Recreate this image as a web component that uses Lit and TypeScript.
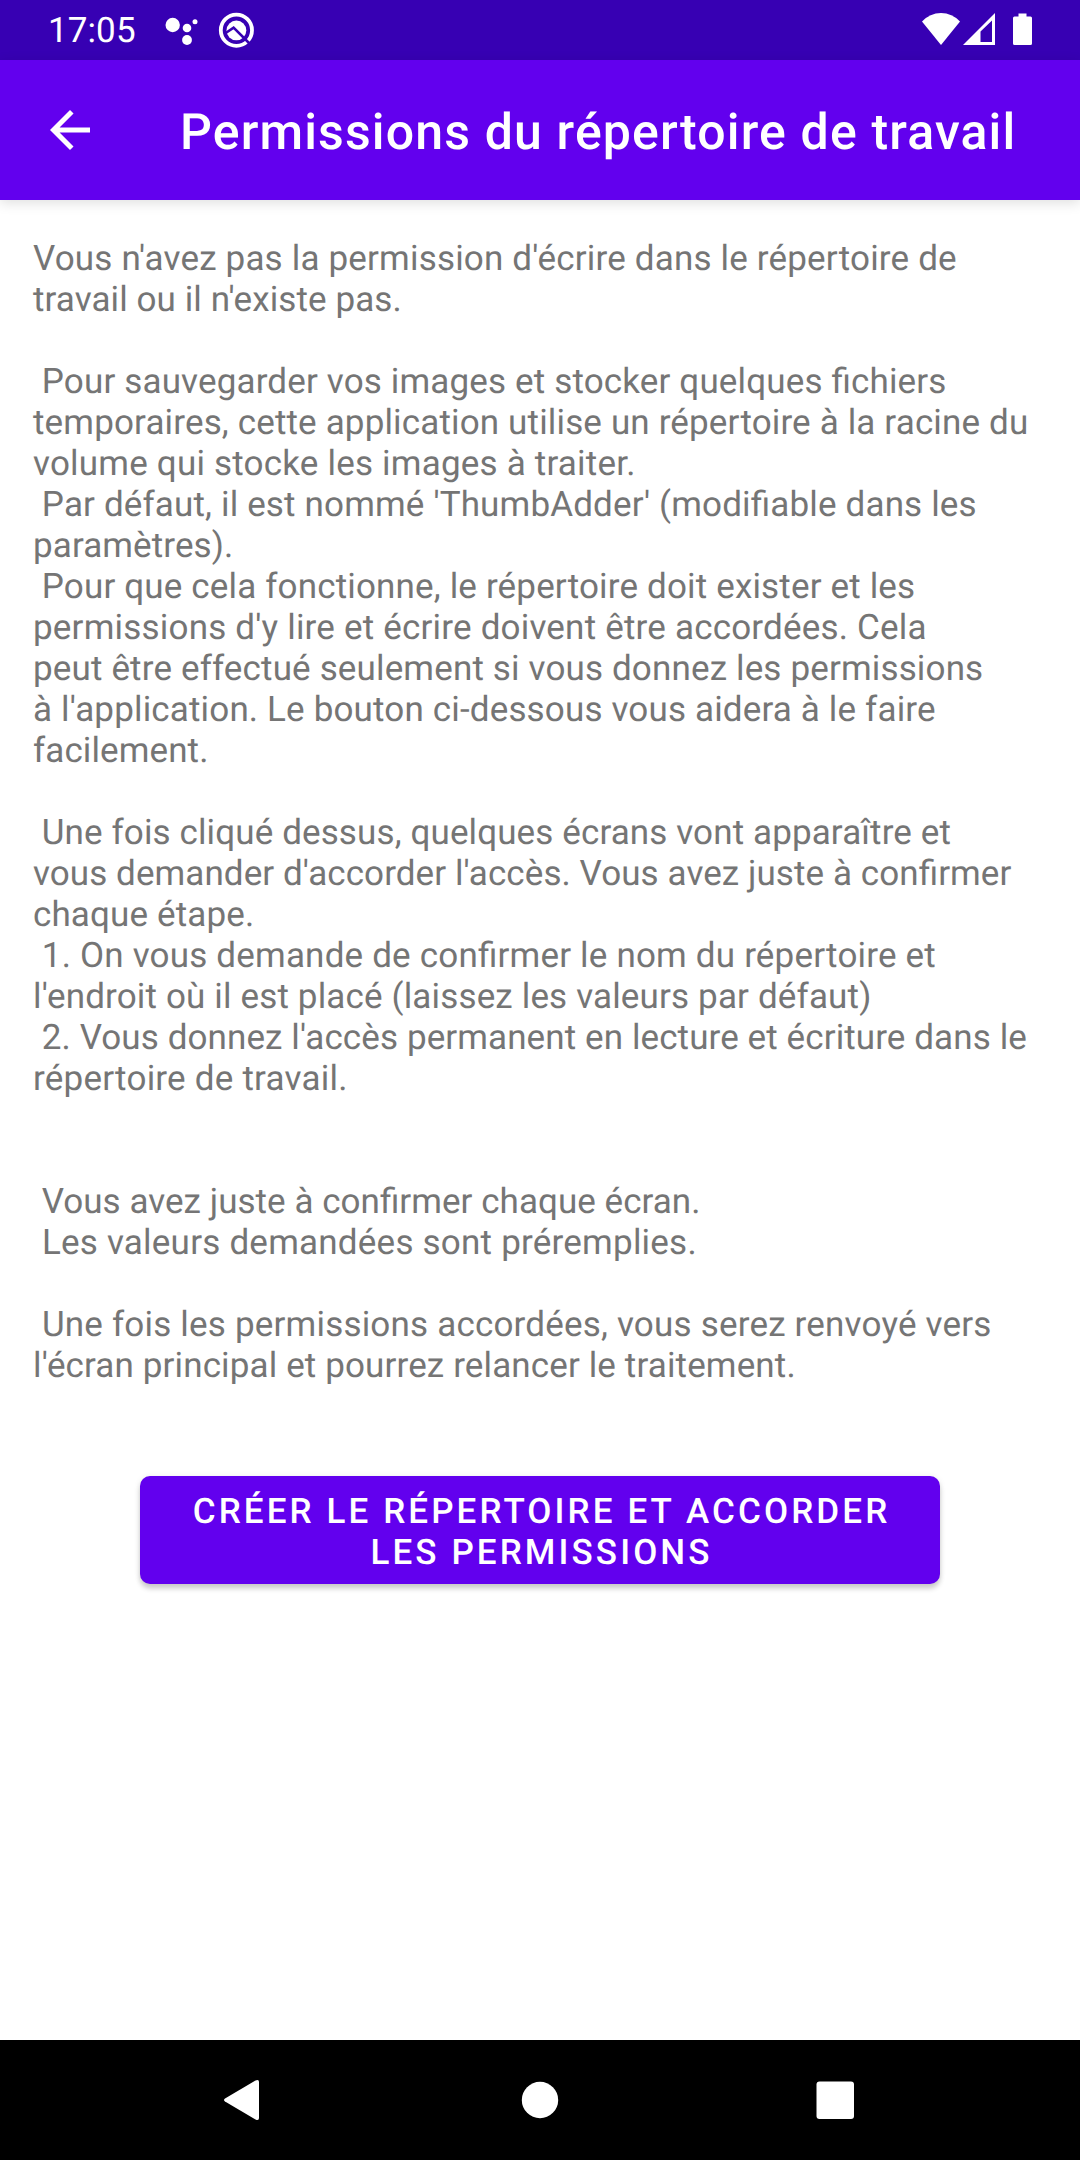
import { LitElement, html, css } from "lit";
import { customElement } from "lit/decorators.js";

interface Line {
  text: string;
  tracking: number;
}

const line = (text = "", tracking = 0): Line => ({ text, tracking });

// Message lines with their letter tracking in pixels.
const MESSAGE: Line[] = [
  line("Vous n'avez pas la permission d'écrire dans le répertoire de", 0.178),
  line("travail ou il n'existe pas.", 0.09),
  line(),
  line(" Pour sauvegarder vos images et stocker quelques fichiers", 0.15),
  line("temporaires, cette application utilise un répertoire à la racine du", 0.15),
  line("volume qui stocke les images à traiter.", 0.2),
  line(" Par défaut, il est nommé 'ThumbAdder' (modifiable dans les", 0.155),
  line("paramètres).", 0.1),
  line(" Pour que cela fonctionne, le répertoire doit exister et les", 0.16),
  line("permissions d'y lire et écrire doivent être accordées. Cela", 0.196),
  line("peut être effectué seulement si vous donnez les permissions", 0.15),
  line("à l'application. Le bouton ci-dessous vous aidera à le faire", 0.16),
  line("facilement.", 0.1),
  line(),
  line(" Une fois cliqué dessus, quelques écrans vont apparaître et", 0.12),
  line("vous demander d'accorder l'accès. Vous avez juste à confirmer", 0.08),
  line("chaque étape.", 0.13),
  line(" 1. On vous demande de confirmer le nom du répertoire et", 0.19),
  line("l'endroit où il est placé (laissez les valeurs par défaut)", 0.155),
  line(" 2. Vous donnez l'accès permanent en lecture et écriture dans le", 0.1),
  line("répertoire de travail.", 0.22),
  line(),
  line(),
  line(" Vous avez juste à confirmer chaque écran.", 0.04),
  line(" Les valeurs demandées sont préremplies.", 0.22),
  line(),
  line(" Une fois les permissions accordées, vous serez renvoyé vers", 0.195),
  line("l'écran principal et pourrez relancer le traitement.", 0.13),
];

@customElement("app-root")
export class AppRoot extends LitElement {
  static styles = css`
    :host {
      display: flex;
      flex-direction: column;
      width: 1080px;
      height: 2160px;
      background: #fff;
      font-family: Roboto, "Liberation Sans", sans-serif;
      text-rendering: geometricPrecision;
      overflow: hidden;
    }
    * {
      box-sizing: border-box;
    }
    svg {
      display: block;
      fill: #fff;
    }
    .status {
      flex: none;
      height: 60px;
      background: #3700b3;
      color: #fff;
      display: flex;
      align-items: center;
      padding: 0 45px 0 48px;
    }
    .clock {
      font-size: 35px;
      line-height: 60px;
      letter-spacing: 0.1px;
      padding-top: 2px;
      width: 112px;
    }
    .grow {
      flex: 1;
    }
    .toolbar {
      flex: none;
      height: 140px;
      background: #6200ee;
      color: #fff;
      display: flex;
      align-items: center;
      padding-left: 40px;
      box-shadow: 0 3px 12px rgba(0, 0, 0, 0.13);
    }
    .back {
      border: 0;
      padding: 0;
      background: none;
      width: 140px;
    }
    .title {
      margin: 0;
      font-size: 50px;
      font-weight: 500;
      letter-spacing: 1.15px;
      line-height: 60px;
      padding-top: 6px;
      white-space: nowrap;
    }
    main {
      flex: 1;
      display: flex;
      flex-direction: column;
      align-items: center;
      padding: 38px 33px 0;
    }
    .message {
      margin: 0;
      align-self: stretch;
      white-space: pre;
      font-size: 35px;
      line-height: 41px;
      font-feature-settings: "liga" 1;
      color: #757575;
    }
    .line {
      display: block;
      height: 41px;
    }
    .action {
      margin-top: 90px;
      width: 800px;
      height: 108px;
      border: 0;
      border-radius: 10px;
      background: #6200ee;
      color: #fff;
      font: 500 35px/41px Roboto, "Liberation Sans", sans-serif;
      text-rendering: inherit;
      letter-spacing: 3.1px;
      text-transform: uppercase;
      padding: 3px 38px 0 41px;
      box-shadow: 0 5px 5px rgba(0, 0, 0, 0.16), 0 1px 6px rgba(0, 0, 0, 0.1);
    }
    .nav {
      flex: none;
      height: 120px;
      background: #000;
    }
  `;

  render() {
    return html`
      <header class="status">
        <span class="clock">17:05</span>
        <svg width="100" height="60" viewBox="160 0 100 60">
          <circle cx="172.7" cy="25" r="7.2" />
          <circle cx="187" cy="28" r="4.3" />
          <circle cx="195" cy="21.7" r="2.5" />
          <circle cx="187" cy="40" r="4.9" />
          <circle cx="236.4" cy="30.2" r="15.6" fill="none" stroke="#fff" stroke-width="3.8" />
          <circle cx="236.4" cy="30.4" r="9.9" />
          <path
            d="M225 33.5L233.6 27.6L250 44"
            fill="none"
            stroke="#3700b3"
            stroke-width="2.6"
          />
        </svg>
        <span class="grow"></span>
        <svg width="118" height="60" viewBox="917 0 118 60">
          <path d="M941 45L922 21.5Q930 13 941 13T960 21.5Z" />
          <path
            fill-rule="evenodd"
            d="M963 45L995 13V45ZM980.5 31.5V42H992V20.5Z"
          />
          <path
            d="M1013 18Q1013 16.5 1014.5 16.5H1018.5V13.5H1026.5V16.5H1030.5Q1032 16.5 1032 18V43.5Q1032 45 1030.5 45H1014.5Q1013 45 1013 43.5Z"
          />
        </svg>
      </header>
      <div class="toolbar">
        <button class="back" aria-label="Retour">
          <svg width="60" height="60" viewBox="0 0 24 24">
            <path d="M20 11H7.83l5.59-5.59L12 4l-8 8 8 8 1.41-1.41L7.83 13H20v-2z" />
          </svg>
        </button>
        <h1 class="title">Permissions du répertoire de travail</h1>
      </div>
      <main>
        <p class="message">${MESSAGE.map(
          (l) => html`<span class="line" style="letter-spacing:${l.tracking}px">${l.text}</span>`
        )}</p>
        <button class="action">
          Créer le répertoire et accorder<br />les permissions
        </button>
      </main>
      <nav class="nav">
        <svg width="1080" height="120" viewBox="0 2040 1080 120">
          <path
            d="M225 2098.5L255.5 2080.5Q259 2079 259 2082V2118Q259 2121 255.5 2119.5L225 2101.5Q223 2100 225 2098.5Z"
          />
          <circle cx="540" cy="2100" r="18.2" />
          <rect x="816.5" y="2081.5" width="37.5" height="37.5" rx="3" />
        </svg>
      </nav>
    `;
  }
}
